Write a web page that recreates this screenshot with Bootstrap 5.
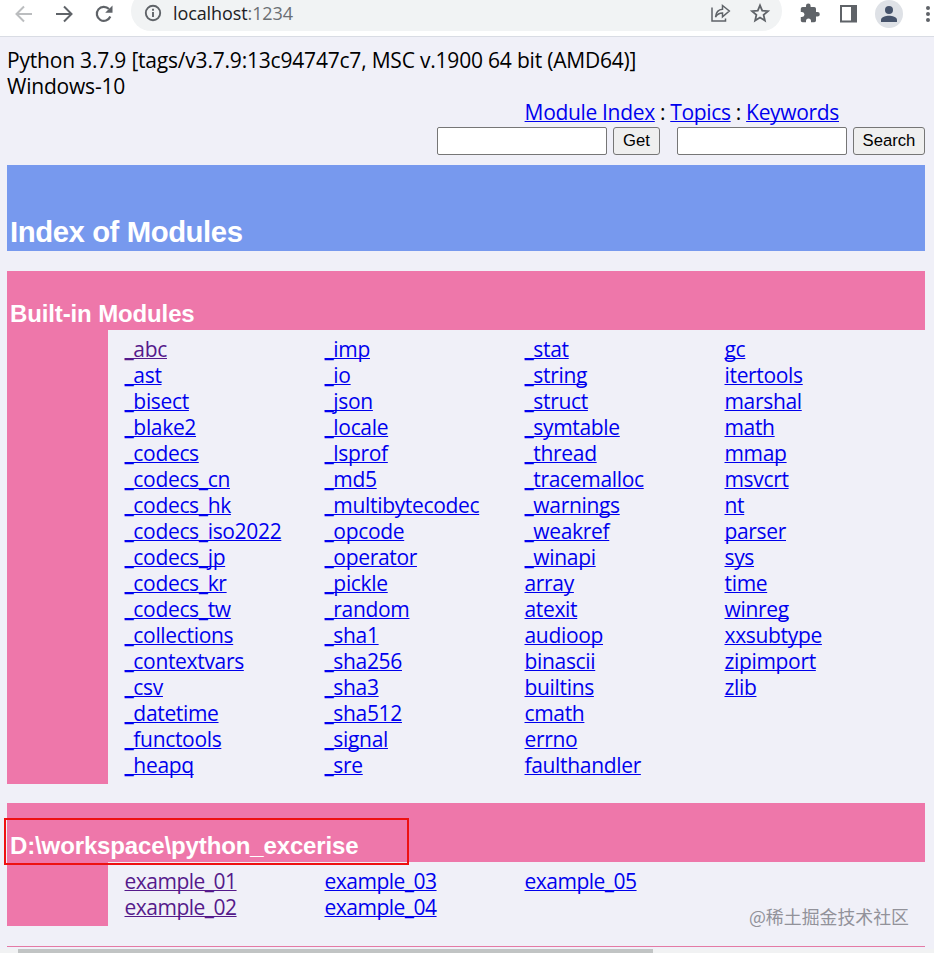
<!DOCTYPE html>
<html lang="en">
<head>
<meta charset="utf-8">
<meta name="viewport" content="width=device-width, initial-scale=1">
<title>Pydoc: Index of Modules</title>
<link href="https://cdn.jsdelivr.net/npm/bootstrap@5.3.0/dist/css/bootstrap.min.css" rel="stylesheet">
<style>
html, body { height: 953px; overflow: hidden; }
body { background: #f0f0f8; color: #000; font-family: "Open Sans", "Noto Sans", sans-serif; font-size: 21px; line-height: 26px; }
.browser-bar { height: 37px; padding-bottom: 9px; background: #fff; border-bottom: 1px solid #d9dce4; }
.nav-icons { width: 131px; padding-left: 14px; gap: 20px; }
.nav-icons svg, .tool-icons svg { display: block; flex: none; }
.address { width: 651px; height: 40px; margin-top: -5px; padding: 4px 10px 0 12px; border-radius: 20px; background: #f1f3f4; }
.address-text { font-size: 18px; letter-spacing: -.1px; color: #202124; margin-left: 10px; }
.address-text span { color: #6b6f73; }
.avatar { width: 28px; height: 28px; margin-left: 17px; background: #dee1e6; }
.page-body { padding: 10px 9px 0 7px; }
.version-text { height: 52px; letter-spacing: -.2px; }
a { color: #0000ee; text-decoration: underline; text-decoration-thickness: 1px; text-underline-offset: 1px; text-decoration-skip-ink: none; }
a:hover { color: #0000ee; }
a.seen { color: #551a8b; }
.topic-links { height: 28px; padding-right: 86px; letter-spacing: -.33px; }
.field { width: 170px; height: 28px; border: 1px solid #767676; border-radius: 2px; background: #fff; padding: 1px 2px; margin-right: 6px; }
.push { height: 28px; border: 1px solid #767676; border-radius: 3px; background: #efefef; color: #000; font: 16.67px/24px "Liberation Sans", Arial, sans-serif; padding: 0; }
.push-get { width: 47px; margin-right: 17px; }
.push-search { width: 72px; }
.heading-main, .heading-section { font-family: "Liberation Sans", Arial, sans-serif; font-weight: 700; color: #fff; margin: 0; padding-left: 3px; }
.heading-main { height: 86px; margin-top: 10px; margin-bottom: 20px; background: #7799ee; font-size: 29.3px; letter-spacing: -.42px; line-height: 34px; padding-bottom: 2px; }
.heading-section { height: 59px; background: #ee77aa; font-size: 24px; letter-spacing: -.13px; line-height: 28px; padding-bottom: 2px; }
.side { width: 101px; background: #ee77aa; flex: none; }
.module-grid { display: grid; grid-auto-flow: column; grid-template-columns: repeat(4, 200px); padding: 6px 0 6px 16.5px; grid-auto-rows: 26px; letter-spacing: -.33px; }
.rows-17 { grid-template-rows: repeat(17, 26px); }
.rows-2 { grid-template-rows: repeat(2, 26px); letter-spacing: -.5px; }
.package-section { margin-top: 19px; }
.callout { left: -3px; top: 15px; width: 405px; height: 47px; border: 2px solid #ee1111; }
.rule-line { height: 1px; background: #e47aa5; margin-top: 20px; }
.scroll-track { height: 6px; margin-top: 2px; background: #f1f2f3; padding-left: 18px; }
.scroll-thumb { width: 635px; height: 6px; background: #c1c4c4; }
.watermark { right: 25px; top: 903px; font: 17.9px/26px "Noto Sans CJK SC", sans-serif; color: #92929a; }
</style>
<script src="https://cdn.jsdelivr.net/npm/bootstrap@5.3.0/dist/js/bootstrap.bundle.min.js"></script>
</head>
<body class="position-relative">
<header class="browser-bar d-flex align-items-center overflow-hidden">
  <div class="nav-icons d-flex align-items-center">
    <svg width="20" height="20" viewBox="0 0 20 20" fill="none" stroke="#bbbdbf" stroke-width="2"><path d="M18 10H3M10 2.500 2.500 10l7.500 7.500"/></svg>
    <svg width="20" height="20" viewBox="0 0 20 20" fill="none" stroke="#5f6368" stroke-width="2"><path d="M2 10h15M10 2.500l7.500 7.500-7.500 7.500"/></svg>
    <svg width="20" height="20" viewBox="0 0 20 20"><path d="M16.300 12.500A7 7 0 1 1 15 5.100" fill="none" stroke="#5f6368" stroke-width="2.200"/><path d="M18.500 1.500v7.300h-7.300z" fill="#5f6368"/></svg>
  </div>
  <div class="address d-flex align-items-center">
    <svg width="20" height="20" viewBox="0 0 20 20" fill="none" stroke="#5f6368" stroke-width="1.900"><circle cx="10" cy="10" r="7.200"/><path d="M10 9v5M10 5.800v2"/></svg>
    <div class="address-text">localhost<span>:1234</span></div>
    <div class="tool-icons d-flex align-items-center ms-auto gap-3">
      <svg width="22" height="20" viewBox="0 0 22 20" fill="none" stroke="#5f6368" stroke-width="1.500"><path d="M2 4.500V18h13.500v-2.500"/><path d="M5.500 14C6 9.500 8.500 6.500 12.500 6.300V2.500L19.300 8l-6.800 5.800V9.900C9.500 9.900 7.300 11 5.500 14z"/></svg>
      <svg width="24" height="22" viewBox="0 0 24 22" fill="none" stroke="#5f6368" stroke-width="1.800"><path d="M12 3.300l2.200 5.300 5.800.5-4.400 3.800 1.300 5.700-4.900-3.100-4.900 3.100 1.300-5.700L4 9.100l5.800-.5z"/></svg>
    </div>
  </div>
  <div class="tool-icons d-flex align-items-center flex-grow-1">
    <svg class="ms-3" width="24" height="22" viewBox="0 0 24 22" fill="#5f6368"><path d="M19.500 9H18V5.700A1.800 1.800 0 0 0 16.200 3.900H12.600V2.700a2.300 2.300 0 0 0-4.600 0v1.200H4.600A1.800 1.800 0 0 0 2.800 5.700V9H4a2.500 2.500 0 0 1 0 5H2.800v3.500a1.800 1.800 0 0 0 1.800 1.800H8V18a2.500 2.500 0 0 1 5 0v1.300h3.200a1.800 1.800 0 0 0 1.800-1.800v-3.900h1.500a2.300 2.300 0 0 0 0-4.600z"/></svg>
    <svg class="ms-3" width="20" height="18" viewBox="-2 0 20 18"><path d="M1 1h15v15.500H1z" fill="#fff" stroke="#5f6368" stroke-width="2"/><path d="M11 1h6v16h-6z" fill="#5f6368"/></svg>
    <div class="avatar rounded-circle d-flex align-items-center justify-content-center flex-shrink-0"><svg width="18" height="18" viewBox="0 0 18 18" fill="#46536b"><circle cx="9" cy="5" r="4"/><path d="M1 17v-2.200C1 12 6 10.800 9 10.800s8 1.200 8 4V17z"/></svg></div>
    <svg class="ms-auto" width="14" height="20" viewBox="0 0 14 20" fill="#5f6368"><circle cx="8" cy="4" r="2"/><circle cx="8" cy="10" r="2"/><circle cx="8" cy="16" r="2"/></svg>
  </div>
</header>
<main class="page-body">
  <div class="version-text">Python 3.7.9 [tags/v3.7.9:13c94747c7, MSC v.1900 64 bit (AMD64)]<br>Windows-10</div>
  <div class="topic-links text-end"><a href="#">Module Index</a> : <a href="#">Topics</a> : <a href="#">Keywords</a></div>
  <div class="d-flex justify-content-end">
    <form class="d-flex"><input class="field" type="text" aria-label="Get"><button class="push push-get" type="button">Get</button></form>
    <form class="d-flex"><input class="field" type="text" aria-label="Search"><button class="push push-search" type="button">Search</button></form>
  </div>
  <h1 class="heading-main d-flex align-items-end">Index of Modules</h1>
  <section>
    <h2 class="heading-section d-flex align-items-end">Built-in Modules</h2>
    <div class="d-flex">
      <div class="side"></div>
      <div class="module-grid rows-17">
        <div><a class="seen" href="#">_abc</a></div><div><a href="#">_ast</a></div><div><a href="#">_bisect</a></div><div><a href="#">_blake2</a></div><div><a href="#">_codecs</a></div><div><a href="#">_codecs_cn</a></div><div><a href="#">_codecs_hk</a></div><div><a href="#">_codecs_iso2022</a></div><div><a href="#">_codecs_jp</a></div><div><a href="#">_codecs_kr</a></div><div><a href="#">_codecs_tw</a></div><div><a href="#">_collections</a></div><div><a href="#">_contextvars</a></div><div><a href="#">_csv</a></div><div><a href="#">_datetime</a></div><div><a href="#">_functools</a></div><div><a href="#">_heapq</a></div>
        <div><a href="#">_imp</a></div><div><a href="#">_io</a></div><div><a href="#">_json</a></div><div><a href="#">_locale</a></div><div><a href="#">_lsprof</a></div><div><a href="#">_md5</a></div><div><a href="#">_multibytecodec</a></div><div><a href="#">_opcode</a></div><div><a href="#">_operator</a></div><div><a href="#">_pickle</a></div><div><a href="#">_random</a></div><div><a href="#">_sha1</a></div><div><a href="#">_sha256</a></div><div><a href="#">_sha3</a></div><div><a href="#">_sha512</a></div><div><a href="#">_signal</a></div><div><a href="#">_sre</a></div>
        <div><a href="#">_stat</a></div><div><a href="#">_string</a></div><div><a href="#">_struct</a></div><div><a href="#">_symtable</a></div><div><a href="#">_thread</a></div><div><a href="#">_tracemalloc</a></div><div><a href="#">_warnings</a></div><div><a href="#">_weakref</a></div><div><a href="#">_winapi</a></div><div><a href="#">array</a></div><div><a href="#">atexit</a></div><div><a href="#">audioop</a></div><div><a href="#">binascii</a></div><div><a href="#">builtins</a></div><div><a href="#">cmath</a></div><div><a href="#">errno</a></div><div><a href="#">faulthandler</a></div>
        <div><a href="#">gc</a></div><div><a href="#">itertools</a></div><div><a href="#">marshal</a></div><div><a href="#">math</a></div><div><a href="#">mmap</a></div><div><a href="#">msvcrt</a></div><div><a href="#">nt</a></div><div><a href="#">parser</a></div><div><a href="#">sys</a></div><div><a href="#">time</a></div><div><a href="#">winreg</a></div><div><a href="#">xxsubtype</a></div><div><a href="#">zipimport</a></div><div><a href="#">zlib</a></div>
      </div>
    </div>
  </section>
  <section class="package-section position-relative">
    <h2 class="heading-section d-flex align-items-end">D:\workspace\python_excerise</h2>
    <div class="d-flex">
      <div class="side"></div>
      <div class="module-grid rows-2">
        <div><a class="seen" href="#">example_01</a></div><div><a class="seen" href="#">example_02</a></div><div><a href="#">example_03</a></div><div><a href="#">example_04</a></div><div><a href="#">example_05</a></div>
      </div>
    </div>
    <div class="callout position-absolute"></div>
  </section>
  <div class="rule-line"></div>
</main>
<div class="scroll-track"><div class="scroll-thumb"></div></div>
<div class="watermark position-absolute">@稀土掘金技术社区</div>
</body>
</html>
